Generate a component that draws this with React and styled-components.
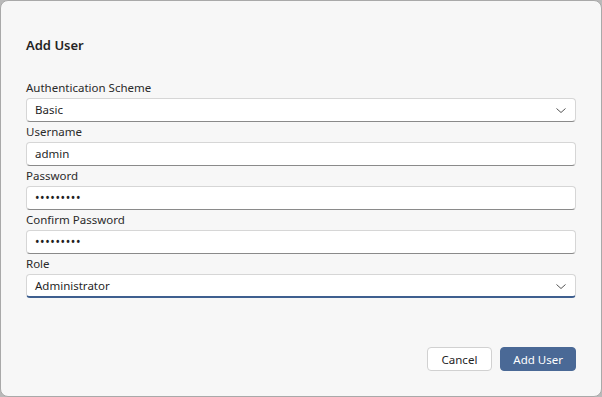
import React, { useState } from 'react';
import styled, { createGlobalStyle } from 'styled-components';

const GlobalStyle = createGlobalStyle`
  html, body {
    margin: 0;
    padding: 0;
    background: #b9b9b9;
  }
  * {
    box-sizing: border-box;
  }
`;

const Window = styled.div`
  width: 602px;
  height: 397px;
  background: #f7f7f7;
  border: 1px solid #a9a9a9;
  border-radius: 8px;
  padding: 30px 25px 25px 25px;
  display: flex;
  flex-direction: column;
  font-family: 'Noto Sans', 'Open Sans', sans-serif;
  font-size: 11.5px;
  color: #1f1f1f;
  overflow: hidden;
`;

const Title = styled.h2`
  margin: 0;
  height: 28px;
  line-height: 28px;
  font-size: 13px;
  font-weight: 600;
  color: #242424;
`;

const Form = styled.div`
  margin-top: 19px;
  display: flex;
  flex-direction: column;
`;

const Label = styled.label`
  display: block;
  height: 20px;
  line-height: 20px;
  color: #2a2a2a;
`;

const Field = styled.div`
  position: relative;
  height: 24px;
  background: #fff;
  border: 1px solid #d6d6d6;
  border-bottom: ${(p) => (p.focused ? '2px solid #3e5f8f' : '1px solid #8a8a8a')};
  border-radius: 4px;
  display: flex;
  align-items: center;
  padding: 0 0 0 8px;
  line-height: 22px;
  color: #1f1f1f;
`;

const Value = styled.span`
  flex: 1;
  letter-spacing: ${(p) => (p.masked ? '0.6px' : '0')};
  font-size: ${(p) => (p.masked ? '12px' : '11.5px')};
`;

const Chevron = styled.svg`
  width: 12px;
  height: 12px;
  margin-right: 8px;
  flex: none;
`;

const Footer = styled.div`
  margin-top: auto;
  display: flex;
  justify-content: flex-end;
  gap: 8px;
`;

const Button = styled.button`
  height: 24px;
  padding: 0 ${(p) => (p.primary ? '12px' : '14px')};
  border-radius: 4px;
  font-family: inherit;
  font-size: 11.5px;
  cursor: pointer;
  border: 1px solid ${(p) => (p.primary ? '#4a6996' : '#d1d1d1')};
  background: ${(p) => (p.primary ? '#4a6996' : '#fff')};
  color: ${(p) => (p.primary ? '#fff' : '#242424')};
`;

const ChevronDown = () => (
  <Chevron viewBox="0 0 12 12">
    <path d="M1.5 4.5 L6 8.5 L10.5 4.5" fill="none" stroke="#555" strokeWidth="1" />
  </Chevron>
);

const fields = [
  { label: 'Authentication Scheme', value: 'Basic', select: true },
  { label: 'Username', value: 'admin' },
  { label: 'Password', value: '•••••••••', masked: true },
  { label: 'Confirm Password', value: '•••••••••', masked: true },
  { label: 'Role', value: 'Administrator', select: true, focused: true },
];

export default function App() {
  const [items] = useState(fields);

  return (
    <>
      <GlobalStyle />
      <Window>
        <Title>Add User</Title>
        <Form>
          {items.map((f) => (
            <div key={f.label}>
              <Label>{f.label}</Label>
              <Field focused={f.focused}>
                <Value masked={f.masked}>{f.value}</Value>
                {f.select && <ChevronDown />}
              </Field>
            </div>
          ))}
        </Form>
        <Footer>
          <Button>Cancel</Button>
          <Button primary>Add User</Button>
        </Footer>
      </Window>
    </>
  );
}
